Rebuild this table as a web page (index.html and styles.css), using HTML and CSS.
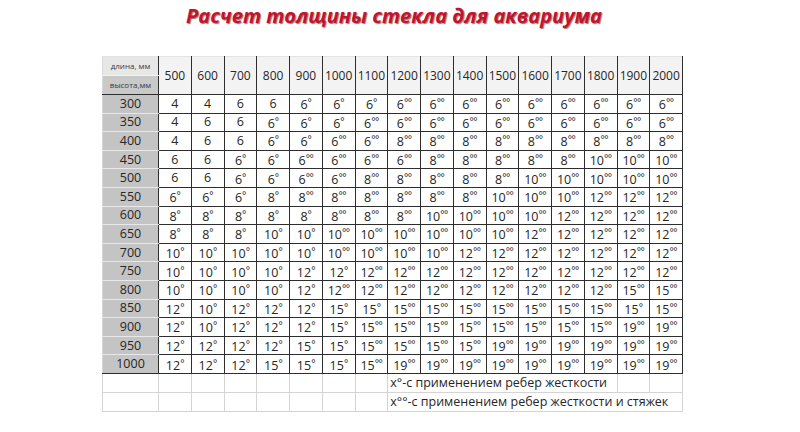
FILE: index.html
```html
<!DOCTYPE html>
<html lang="ru">
<head>
<meta charset="utf-8">
<title>Расчет толщины стекла для аквариума</title>
<link rel="stylesheet" href="styles.css">
</head>
<body>
<h1 class="title">Расчет толщины стекла для аквариума</h1>
<div class="wrap">
<table class="grid">
<colgroup>
<col class="c-lab"><col><col><col><col><col><col><col><col><col><col><col><col><col><col><col><col>
</colgroup>
<tbody>
<tr class="h1"><td class="lab-top">длина, мм</td><td class="hd" rowspan="2">500</td><td class="hd" rowspan="2">600</td><td class="hd" rowspan="2">700</td><td class="hd" rowspan="2">800</td><td class="hd" rowspan="2">900</td><td class="hd" rowspan="2">1000</td><td class="hd" rowspan="2">1100</td><td class="hd" rowspan="2">1200</td><td class="hd" rowspan="2">1300</td><td class="hd" rowspan="2">1400</td><td class="hd" rowspan="2">1500</td><td class="hd" rowspan="2">1600</td><td class="hd" rowspan="2">1700</td><td class="hd" rowspan="2">1800</td><td class="hd" rowspan="2">1900</td><td class="hd" rowspan="2">2000</td></tr>
<tr class="h2"><td class="lab-bot">высота,мм</td></tr>
<tr><th>300</th><td>4</td><td>4</td><td>6</td><td>6</td><td>6<i>°</i></td><td>6<i>°</i></td><td>6<i>°</i></td><td>6<i>°°</i></td><td>6<i>°°</i></td><td>6<i>°°</i></td><td>6<i>°°</i></td><td>6<i>°°</i></td><td>6<i>°°</i></td><td>6<i>°°</i></td><td>6<i>°°</i></td><td>6<i>°°</i></td></tr>
<tr><th>350</th><td>4</td><td>6</td><td>6</td><td>6<i>°</i></td><td>6<i>°</i></td><td>6<i>°</i></td><td>6<i>°°</i></td><td>6<i>°°</i></td><td>6<i>°°</i></td><td>6<i>°°</i></td><td>6<i>°°</i></td><td>6<i>°°</i></td><td>6<i>°°</i></td><td>6<i>°°</i></td><td>6<i>°°</i></td><td>6<i>°°</i></td></tr>
<tr><th>400</th><td>4</td><td>6</td><td>6</td><td>6<i>°</i></td><td>6<i>°</i></td><td>6<i>°°</i></td><td>6<i>°°</i></td><td>8<i>°°</i></td><td>8<i>°°</i></td><td>8<i>°°</i></td><td>8<i>°°</i></td><td>8<i>°°</i></td><td>8<i>°°</i></td><td>8<i>°°</i></td><td>8<i>°°</i></td><td>8<i>°°</i></td></tr>
<tr><th>450</th><td>6</td><td>6</td><td>6<i>°</i></td><td>6<i>°</i></td><td>6<i>°°</i></td><td>6<i>°°</i></td><td>6<i>°°</i></td><td>6<i>°°</i></td><td>8<i>°°</i></td><td>8<i>°°</i></td><td>8<i>°°</i></td><td>8<i>°°</i></td><td>8<i>°°</i></td><td>10<i>°°</i></td><td>10<i>°°</i></td><td>10<i>°°</i></td></tr>
<tr><th>500</th><td>6</td><td>6</td><td>6<i>°</i></td><td>6<i>°</i></td><td>6<i>°°</i></td><td>6<i>°°</i></td><td>8<i>°°</i></td><td>8<i>°°</i></td><td>8<i>°°</i></td><td>8<i>°°</i></td><td>8<i>°°</i></td><td>10<i>°°</i></td><td>10<i>°°</i></td><td>10<i>°°</i></td><td>10<i>°°</i></td><td>10<i>°°</i></td></tr>
<tr><th>550</th><td>6<i>°</i></td><td>6<i>°</i></td><td>6<i>°</i></td><td>8<i>°</i></td><td>8<i>°°</i></td><td>8<i>°°</i></td><td>8<i>°°</i></td><td>8<i>°°</i></td><td>8<i>°°</i></td><td>8<i>°°</i></td><td>10<i>°°</i></td><td>10<i>°°</i></td><td>10<i>°°</i></td><td>12<i>°°</i></td><td>12<i>°°</i></td><td>12<i>°°</i></td></tr>
<tr><th>600</th><td>8<i>°</i></td><td>8<i>°</i></td><td>8<i>°</i></td><td>8<i>°</i></td><td>8<i>°</i></td><td>8<i>°°</i></td><td>8<i>°°</i></td><td>8<i>°°</i></td><td>10<i>°°</i></td><td>10<i>°°</i></td><td>10<i>°°</i></td><td>10<i>°°</i></td><td>12<i>°°</i></td><td>12<i>°°</i></td><td>12<i>°°</i></td><td>12<i>°°</i></td></tr>
<tr><th>650</th><td>8<i>°</i></td><td>8<i>°</i></td><td>8<i>°</i></td><td>10<i>°</i></td><td>10<i>°</i></td><td>10<i>°°</i></td><td>10<i>°°</i></td><td>10<i>°°</i></td><td>10<i>°°</i></td><td>10<i>°°</i></td><td>10<i>°°</i></td><td>12<i>°°</i></td><td>12<i>°°</i></td><td>12<i>°°</i></td><td>12<i>°°</i></td><td>12<i>°°</i></td></tr>
<tr><th>700</th><td>10<i>°</i></td><td>10<i>°</i></td><td>10<i>°</i></td><td>10<i>°</i></td><td>10<i>°</i></td><td>10<i>°°</i></td><td>10<i>°°</i></td><td>10<i>°°</i></td><td>10<i>°°</i></td><td>12<i>°°</i></td><td>12<i>°°</i></td><td>12<i>°°</i></td><td>12<i>°°</i></td><td>12<i>°°</i></td><td>12<i>°°</i></td><td>12<i>°°</i></td></tr>
<tr><th>750</th><td>10<i>°</i></td><td>10<i>°</i></td><td>10<i>°</i></td><td>10<i>°</i></td><td>12<i>°</i></td><td>12<i>°</i></td><td>12<i>°°</i></td><td>12<i>°°</i></td><td>12<i>°°</i></td><td>12<i>°°</i></td><td>12<i>°°</i></td><td>12<i>°°</i></td><td>12<i>°°</i></td><td>12<i>°°</i></td><td>12<i>°°</i></td><td>12<i>°°</i></td></tr>
<tr><th>800</th><td>10<i>°</i></td><td>10<i>°</i></td><td>10<i>°</i></td><td>10<i>°</i></td><td>12<i>°</i></td><td>12<i>°°</i></td><td>12<i>°°</i></td><td>12<i>°°</i></td><td>12<i>°°</i></td><td>12<i>°°</i></td><td>12<i>°°</i></td><td>12<i>°°</i></td><td>12<i>°°</i></td><td>12<i>°°</i></td><td>15<i>°°</i></td><td>15<i>°°</i></td></tr>
<tr><th>850</th><td>12<i>°</i></td><td>10<i>°</i></td><td>12<i>°</i></td><td>12<i>°</i></td><td>12<i>°</i></td><td>15<i>°</i></td><td>15<i>°</i></td><td>15<i>°°</i></td><td>15<i>°°</i></td><td>15<i>°°</i></td><td>15<i>°°</i></td><td>15<i>°°</i></td><td>15<i>°°</i></td><td>15<i>°°</i></td><td>15<i>°</i></td><td>15<i>°°</i></td></tr>
<tr><th>900</th><td>12<i>°</i></td><td>10<i>°</i></td><td>12<i>°</i></td><td>12<i>°</i></td><td>12<i>°</i></td><td>15<i>°</i></td><td>15<i>°°</i></td><td>15<i>°°</i></td><td>15<i>°°</i></td><td>15<i>°°</i></td><td>15<i>°°</i></td><td>15<i>°°</i></td><td>15<i>°°</i></td><td>15<i>°°</i></td><td>19<i>°°</i></td><td>19<i>°°</i></td></tr>
<tr><th>950</th><td>12<i>°</i></td><td>12<i>°</i></td><td>12<i>°</i></td><td>12<i>°</i></td><td>15<i>°</i></td><td>15<i>°</i></td><td>15<i>°°</i></td><td>15<i>°°</i></td><td>15<i>°°</i></td><td>15<i>°°</i></td><td>19<i>°°</i></td><td>19<i>°°</i></td><td>19<i>°°</i></td><td>19<i>°°</i></td><td>19<i>°°</i></td><td>19<i>°°</i></td></tr>
<tr class="last"><th>1000</th><td>12<i>°</i></td><td>12<i>°</i></td><td>12<i>°</i></td><td>15<i>°</i></td><td>15<i>°</i></td><td>15<i>°</i></td><td>15<i>°°</i></td><td>19<i>°°</i></td><td>19<i>°°</i></td><td>19<i>°°</i></td><td>19<i>°°</i></td><td>19<i>°°</i></td><td>19<i>°°</i></td><td>19<i>°°</i></td><td>19<i>°°</i></td><td>19<i>°°</i></td></tr>
<tr class="note"><td></td><td></td><td></td><td></td><td></td><td></td><td></td><td></td><td class="txt" colspan="7">x°-с применением ребер жесткости</td><td></td><td></td></tr>
<tr class="note"><td></td><td></td><td></td><td></td><td></td><td></td><td></td><td></td><td class="txt" colspan="9">x°°-с применением ребер жесткости и стяжек</td></tr>
</tbody>
</table>
</div>
</body>
</html>
```

FILE: styles.css
```css
html, body {
  margin: 0;
  padding: 0;
  background: #ffffff;
}
body {
  width: 800px;
  height: 432px;
  overflow: hidden;
  font-family: "Open Sans", "Liberation Sans", sans-serif;
  color: #262626;
}
.title {
  margin: 0;
  height: 56px;
  padding-top: 3px;
  padding-right: 12px;
  box-sizing: border-box;
  text-align: center;
  font-family: "Open Sans", "Liberation Sans", sans-serif;
  font-style: italic;
  font-weight: 700;
  font-size: 20px;
  line-height: 26px;
  color: #c4122f;
  text-shadow: 1px 1px 1px rgba(60, 0, 0, 0.55);
}
.wrap {
  padding-left: 102px;
}
.grid {
  border-collapse: collapse;
  table-layout: fixed;
  width: 580px;
}
.grid col { width: 32.75px; }
.grid col.c-lab { width: 56px; }
.grid tr { height: 18.6px; }
.grid td, .grid th {
  padding: 0;
  text-align: center;
  white-space: nowrap;
  overflow: visible;
  font-size: 12.5px;
  font-weight: 400;
  line-height: 14px;
  border: 1.5px solid #2e2e2e;
  background: #ffffff;
}
.grid th {
  background: #c4c4c4;
  border-left-color: #d6d6d6;
  border-top-color: #e8e8e8;
  border-bottom-color: #e8e8e8;
  color: #262626;
}
.grid tr.last th { border-bottom-color: #2e2e2e; }
.grid i {
  font-style: normal;
  font-size: 10px;
  vertical-align: 3px;
  letter-spacing: -0.5px;
}
.grid tr.h1, .grid tr.h2 { height: 19px; }
.hd {
  background: #f3f3f3 !important;
  font-size: 12px !important;
  border-top: 1px solid #e4e4e4 !important;
}
.lab-top, .lab-bot {
  font-size: 8px !important;
  line-height: 10px !important;
  color: #3a3a3a;
  border-left: 1px solid #d8d8d8 !important;
}
.lab-top {
  background: #e7e7e7 !important;
  border-top: 1px solid #e4e4e4 !important;
  border-bottom: 1px solid #f4f4f4 !important;
}
.lab-bot {
  background: #c9c9c9 !important;
  border-top: 1px solid #f4f4f4 !important;
}
.grid tr.note { height: 19px; }
.note td {
  border: 1px solid #d4d4d4;
}
.note td.txt {
  text-align: left;
  padding-left: 2px;
  font-size: 12.5px;
  color: #262626;
}
```
